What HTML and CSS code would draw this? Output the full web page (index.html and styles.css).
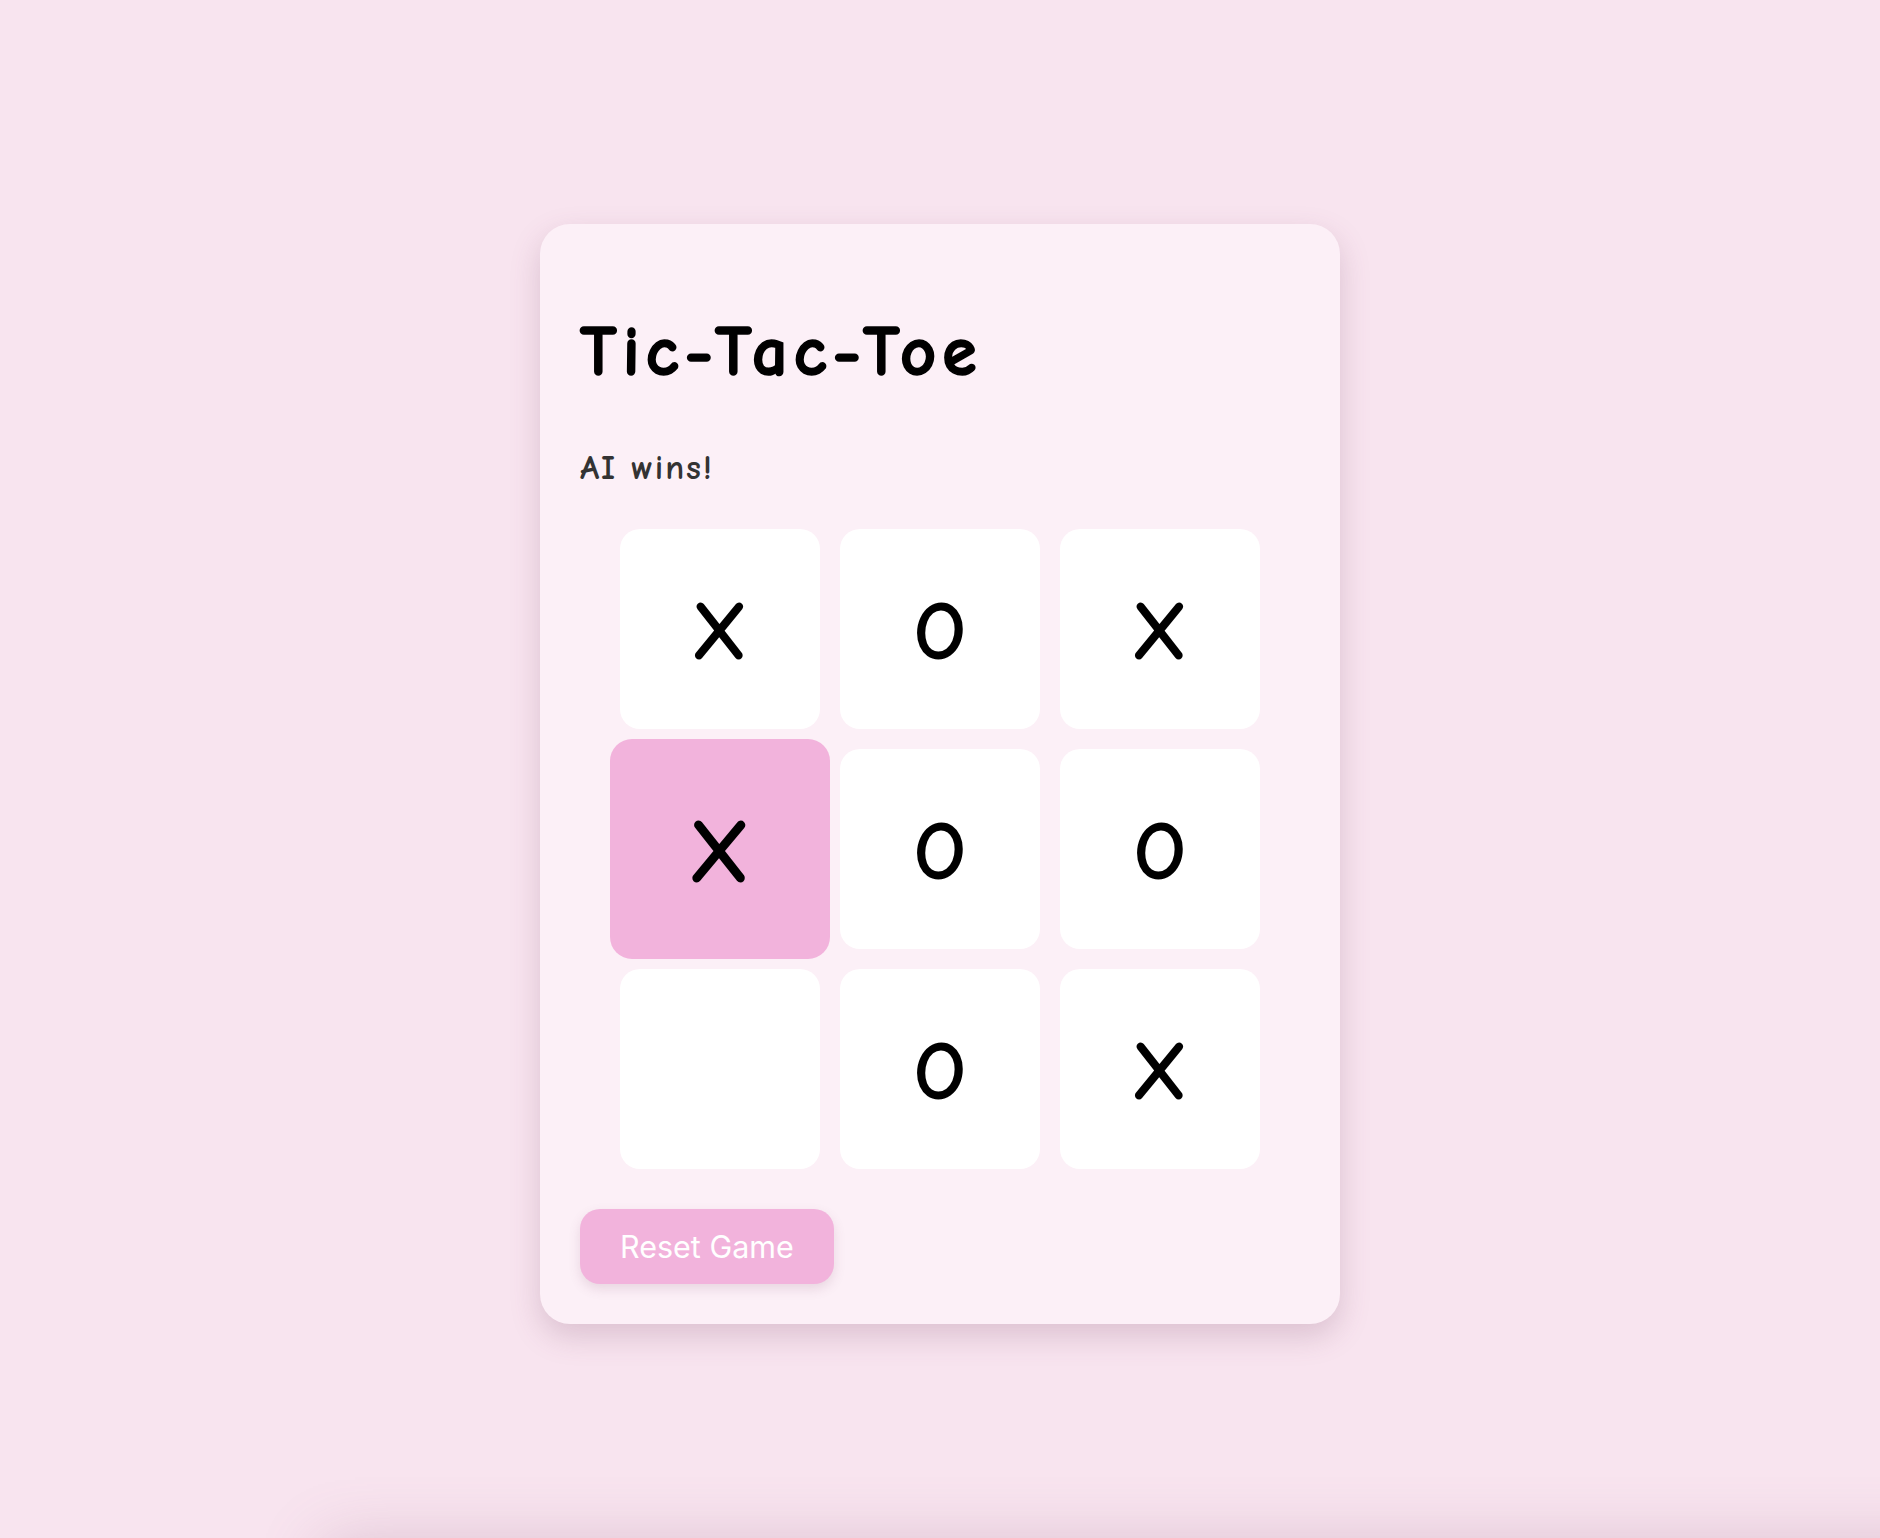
FILE: index.html
```html
<!DOCTYPE html>
<html lang="en">
<head>
<meta charset="utf-8">
<title>Tic-Tac-Toe</title>
<link rel="stylesheet" href="styles.css">
</head>
<body>
<main class="card">
  <h1 class="title">Tic-Tac-Toe</h1>
  <p class="status">AI wins!</p>
  <div class="board">
    <button class="cell">X</button>
    <button class="cell">O</button>
    <button class="cell">X</button>
    <button class="cell cell--win">X</button>
    <button class="cell">O</button>
    <button class="cell">O</button>
    <button class="cell"></button>
    <button class="cell">O</button>
    <button class="cell">X</button>
  </div>
  <button class="reset">Reset Game</button>
</main>
<div class="dock" aria-hidden="true"></div>
</body>
</html>
```
FILE: styles.css
```css
* { box-sizing: border-box; }

html, body {
  margin: 0;
  padding: 0;
}

body {
  min-height: 100vh;
  background: #f8e4ef;
  display: flex;
  align-items: center;
  justify-content: center;
  padding-top: 9px;
  font-family: "Comic Sans MS", "Comic Neue", "DejaVu Sans", sans-serif;
  overflow: hidden;
  position: relative;
}

.card {
  width: 800px;
  padding: 40px;
  background: #fcf0f7;
  border-radius: 30px;
  box-shadow: 0 12px 30px rgba(120, 70, 100, 0.22);
}

.title {
  margin: 47px 0 52px;
  font-size: 70px;
  line-height: 1.2;
  font-weight: bold;
  letter-spacing: 6px;
  -webkit-text-stroke: 1.6px #000;
  color: #000;
}

.status {
  margin: 0 0 40px;
  font-size: 35px;
  line-height: 1.2;
  font-weight: bold;
  letter-spacing: 1.8px;
  color: #333;
}

.board {
  width: 640px;
  margin: 0 auto;
  display: grid;
  grid-template-columns: repeat(3, 200px);
  grid-auto-rows: 200px;
  gap: 20px;
}

.cell {
  border: none;
  background: #fff;
  border-radius: 20px;
  display: flex;
  align-items: center;
  justify-content: center;
  padding: 8px 0 0;
  font-family: "Comic Sans MS", "Comic Neue", "DejaVu Sans", sans-serif;
  font-size: 82px;
  font-weight: bold;
  line-height: 1;
  color: #000;
}

.cell--win {
  background: #f2b3dc;
  transform: scale(1.1);
}

.reset {
  display: block;
  margin-top: 40px;
  padding: 20px 40px;
  border: none;
  border-radius: 20px;
  background: #f2b3dc;
  color: #fff;
  font-family: Inter, "Noto Sans", sans-serif;
  font-size: 30.5px;
  line-height: 35px;
  box-shadow: 0 5px 12px rgba(120, 70, 100, 0.15);
}

.dock {
  position: absolute;
  top: 1570px;
  left: 350px;
  width: 1700px;
  height: 200px;
  background: #f8e4ef;
  box-shadow: 0 0 60px 25px rgba(150, 100, 130, 0.3);
}
```
